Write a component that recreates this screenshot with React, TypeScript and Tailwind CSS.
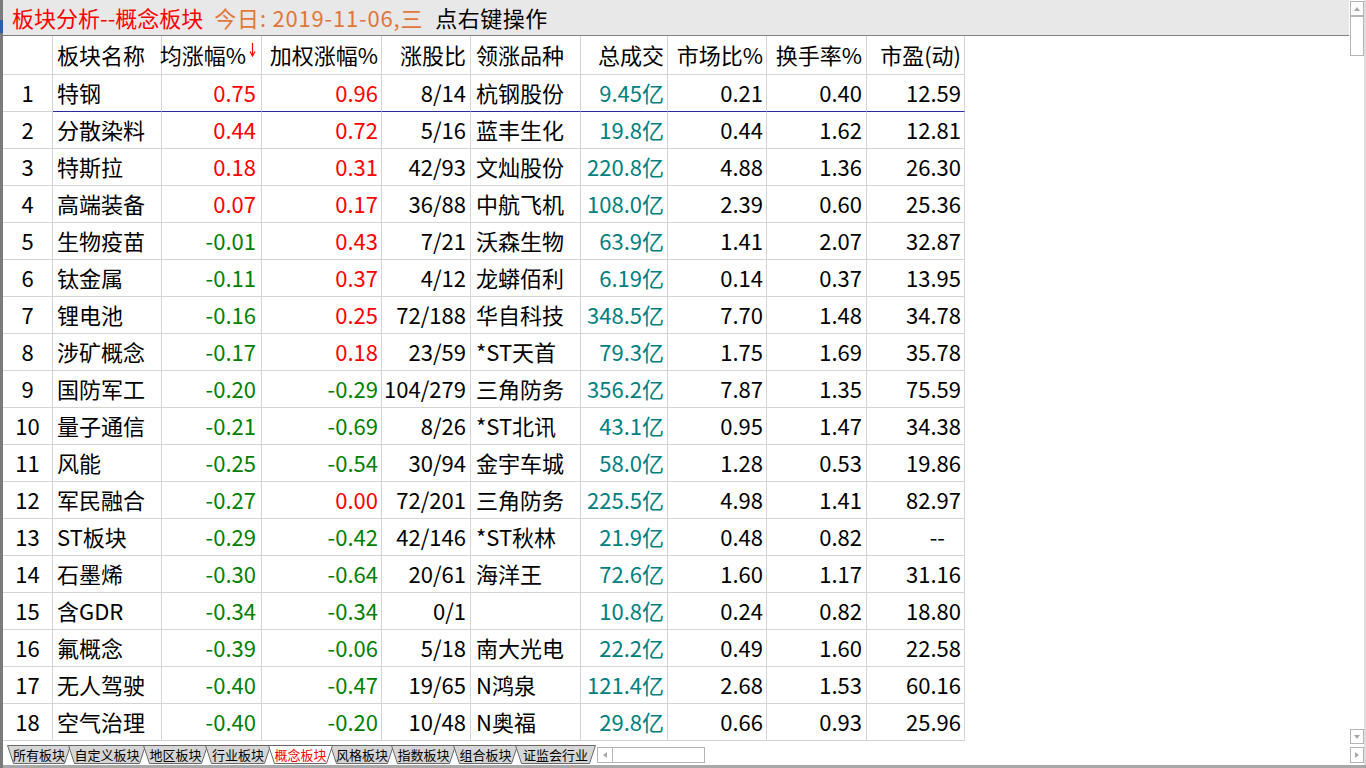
import React from "react";

type Row = [string, string, string, string, string, string, string, string, string];

const rows: Row[] = [
  ["特钢", "0.75", "0.96", "8/14", "杭钢股份", "9.45亿", "0.21", "0.40", "12.59"],
  ["分散染料", "0.44", "0.72", "5/16", "蓝丰生化", "19.8亿", "0.44", "1.62", "12.81"],
  ["特斯拉", "0.18", "0.31", "42/93", "文灿股份", "220.8亿", "4.88", "1.36", "26.30"],
  ["高端装备", "0.07", "0.17", "36/88", "中航飞机", "108.0亿", "2.39", "0.60", "25.36"],
  ["生物疫苗", "-0.01", "0.43", "7/21", "沃森生物", "63.9亿", "1.41", "2.07", "32.87"],
  ["钛金属", "-0.11", "0.37", "4/12", "龙蟒佰利", "6.19亿", "0.14", "0.37", "13.95"],
  ["锂电池", "-0.16", "0.25", "72/188", "华自科技", "348.5亿", "7.70", "1.48", "34.78"],
  ["涉矿概念", "-0.17", "0.18", "23/59", "*ST天首", "79.3亿", "1.75", "1.69", "35.78"],
  ["国防军工", "-0.20", "-0.29", "104/279", "三角防务", "356.2亿", "7.87", "1.35", "75.59"],
  ["量子通信", "-0.21", "-0.69", "8/26", "*ST北讯", "43.1亿", "0.95", "1.47", "34.38"],
  ["风能", "-0.25", "-0.54", "30/94", "金宇车城", "58.0亿", "1.28", "0.53", "19.86"],
  ["军民融合", "-0.27", "0.00", "72/201", "三角防务", "225.5亿", "4.98", "1.41", "82.97"],
  ["ST板块", "-0.29", "-0.42", "42/146", "*ST秋林", "21.9亿", "0.48", "0.82", "--"],
  ["石墨烯", "-0.30", "-0.64", "20/61", "海洋王", "72.6亿", "1.60", "1.17", "31.16"],
  ["含GDR", "-0.34", "-0.34", "0/1", "", "10.8亿", "0.24", "0.82", "18.80"],
  ["氟概念", "-0.39", "-0.06", "5/18", "南大光电", "22.2亿", "0.49", "1.60", "22.58"],
  ["无人驾驶", "-0.40", "-0.47", "19/65", "N鸿泉", "121.4亿", "2.68", "1.53", "60.16"],
  ["空气治理", "-0.40", "-0.20", "10/48", "N奥福", "29.8亿", "0.66", "0.93", "25.96"],
];

// column widths + alignment (written out so tailwind picks them up)
const COLS = [
  { w: "w-[50px]", align: "justify-center" },
  { w: "w-[109px]", align: "justify-start pl-[4px]" },
  { w: "w-[100px]", align: "justify-end pr-[5px]" },
  { w: "w-[120px]", align: "justify-end pr-[3px]" },
  { w: "w-[89px]", align: "justify-end pr-[4px]" },
  { w: "w-[110px]", align: "justify-start pl-[5px]" },
  { w: "w-[87px]", align: "justify-end pr-[3px]" },
  { w: "w-[99px]", align: "justify-end pr-[3px]" },
  { w: "w-[100px]", align: "justify-end pr-[4px]" },
  { w: "w-[98px]", align: "justify-end pr-[3px]" },
];

const headers = ["", "板块名称", "均涨幅%", "加权涨幅%", "涨股比", "领涨品种", "总成交", "市场比%", "换手率%", "市盈(动)"];

const tabs = [
  { label: "所有板块", w: 64, cls: "w-[64px]" },
  { label: "自定义板块", w: 78, cls: "w-[78px]" },
  { label: "地区板块", w: 65, cls: "w-[65px]" },
  { label: "行业板块", w: 66, cls: "w-[66px]" },
  { label: "概念板块", w: 65, cls: "w-[65px]", active: true },
  { label: "风格板块", w: 64, cls: "w-[64px]" },
  { label: "指数板块", w: 65, cls: "w-[65px]" },
  { label: "组合板块", w: 65, cls: "w-[65px]" },
  { label: "证监会行业", w: 81, cls: "w-[81px]" },
];

function cellColor(j: number, v: string) {
  if (j === 2 || j === 3) return v.startsWith("-") ? "text-[#008000]" : "text-[#ff0000]";
  if (j === 6) return "text-[#008080]";
  return "text-black";
}

function Tri({ dir }: { dir: "up" | "down" | "left" | "right" }) {
  const pts = {
    up: "1,6 7,6 4,2",
    down: "1,2 7,2 4,6",
    left: "6,1 6,7 2,4",
    right: "2,1 2,7 6,4",
  }[dir];
  return (
    <svg width="8" height="8" viewBox="0 0 8 8">
      <polygon points={pts} fill="#a8a8a8" />
    </svg>
  );
}

export default function App() {
  return (
    <div className="w-[1366px] h-[768px] bg-white flex overflow-hidden font-['Noto_Sans_CJK_SC','Liberation_Sans',sans-serif]">
      {/* left window edge */}
      <div className="w-[3px] bg-[#7a7a7a] flex flex-col">
        <div className="h-[20px]" />
        <div className="h-[13px] bg-[#2a5fa8]" />
      </div>

      <div className="flex-1 flex flex-col">
        <div className="flex h-[745px]">
          <div className="flex-1 flex flex-col">
            {/* title bar */}
            <div className="h-[36px] bg-[#e8e8e8] border-b border-[#808080] flex items-center pl-[9px] text-[22px] leading-none pb-[2px] whitespace-nowrap">
              <span className="text-[#ff0000]">板块分析--概念板块</span>
              <span className="text-[#e0773a] ml-[11px] tracking-[0.8px]">今日: 2019-11-06,三</span>
              <span className="text-black ml-[12px] tracking-[0.5px]">点右键操作</span>
            </div>

            {/* header */}
            <div className="flex h-[39px] text-[22px] leading-none">
              {headers.map((h, j) => (
                <div
                  key={j}
                  className={`${COLS[j].w} ${COLS[j].align} flex items-center pb-[2px] whitespace-nowrap border-r border-b border-[#d4d4d4] text-black`}
                >
                  {h}
                  {j === 2 && (
                    <svg width="7" height="14" viewBox="0 0 7 14" className="shrink-0 ml-[3px] mb-[8px]">
                      <line x1="3.5" y1="0" x2="3.5" y2="12" stroke="#ff0000" strokeWidth="1.2" />
                      <polyline points="1,8.5 3.5,13 6,8.5" fill="none" stroke="#ff0000" strokeWidth="1.2" />
                    </svg>
                  )}
                </div>
              ))}
            </div>

            {/* rows */}
            {rows.map((r, i) => {
              const cells = [String(i + 1), ...r];
              return (
                <div key={i} className="flex h-[37px] text-[22px] leading-none">
                  {cells.map((c, j) => (
                    <div
                      key={j}
                      className={`${COLS[j].w} ${COLS[j].align} ${cellColor(j, c)} flex items-center pb-[2px] whitespace-nowrap border-r border-b border-r-[#d4d4d4] ${
                        i === 0 && j > 0 ? "border-b-[#2a2aa0]" : "border-b-[#d4d4d4]"
                      }`}
                    >
                      {c === "--" ? <span className="mr-[16px]">--</span> : c}
                    </div>
                  ))}
                </div>
              );
            })}
          </div>

          {/* vertical scrollbar */}
          <div className="w-[17px] flex">
            <div className="w-[15px] flex flex-col items-end">
              <div className="w-[14px] h-[15px] mt-[1px] border border-[#b4b4b4] flex items-center justify-center">
                <Tri dir="up" />
              </div>
              <div className="w-[14px] h-[40px] border border-[#b4b4b4]" />
              <div className="flex-1" />
              <div className="w-[14px] h-[15px] mb-[1px] border border-[#b4b4b4] flex items-center justify-center">
                <Tri dir="down" />
              </div>
            </div>
            <div className="w-[2px] bg-[#dcdcdc]" />
          </div>
        </div>

        {/* sheet tabs */}
        <div className="h-[20px] flex items-start pl-[4px]">
          {tabs.map((t, k) => (
            <div
              key={k}
              className={`${t.cls} relative h-[19px] -mr-[3px] flex items-center justify-center text-[13px] leading-none ${
                t.active ? "z-10 text-[#ff0000]" : "text-black"
              }`}
            >
              <svg
                className="absolute inset-0"
                width={t.w}
                height={19}
                viewBox={`0 0 ${t.w} 19`}
              >
                <polygon
                  points={`0.5,0.5 ${t.w - 0.5},0.5 ${t.w - 6.5},18.5 6.5,18.5`}
                  fill={t.active ? "#ffffff" : "#d6d6d6"}
                  stroke="#6a6a6a"
                  strokeWidth="1"
                />
              </svg>
              <span className="relative">{t.label}</span>
            </div>
          ))}
          {/* horizontal scrollbar */}
          <div className="ml-[4px] mt-[2px] flex h-[16px]">
            <div className="w-[16px] border border-[#b4b4b4] flex items-center justify-center">
              <Tri dir="left" />
            </div>
            <div className="w-[92px] border border-l-0 border-[#b4b4b4]" />
          </div>
          <div className="flex-1" />
          <div className="w-[17px] flex">
            <div className="w-[15px] flex justify-end">
              <div className="w-[14px] h-[16px] mt-[2px] border border-[#b4b4b4] flex items-center justify-center">
                <Tri dir="right" />
              </div>
            </div>
            <div className="w-[2px] h-[20px] bg-[#dcdcdc]" />
          </div>
        </div>

        <div className="h-[3px] bg-[#a8a8a8]" />
      </div>
    </div>
  );
}
